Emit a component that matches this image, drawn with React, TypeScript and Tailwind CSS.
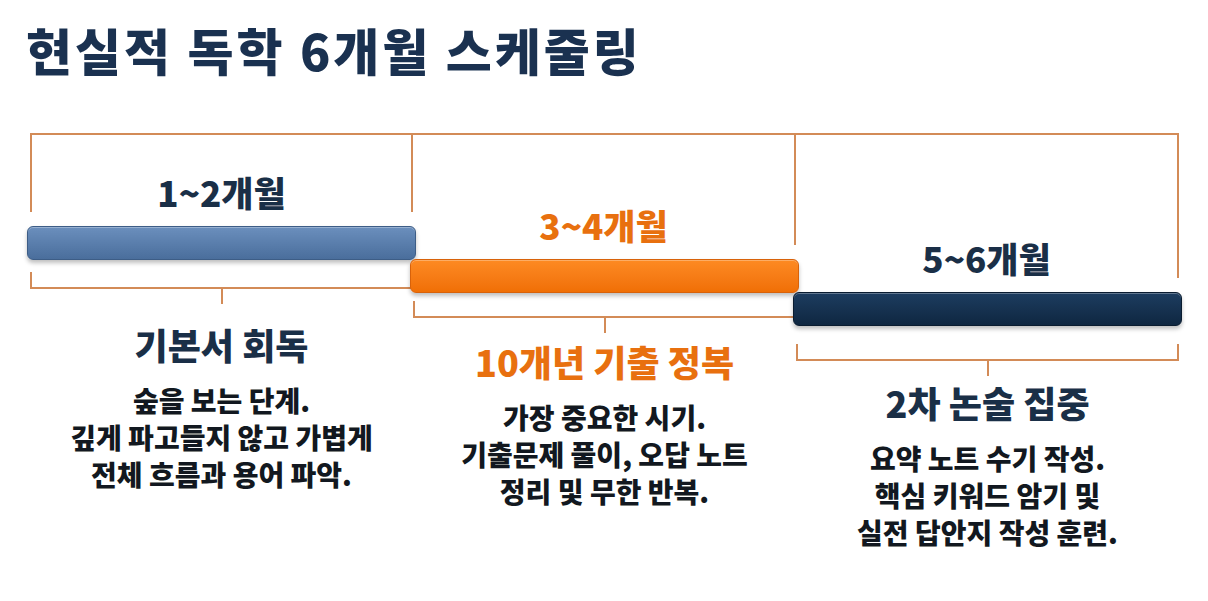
const font = { fontFamily: '"Noto Sans CJK KR", "Noto Sans", sans-serif' };

type Phase = {
  range: string;
  title: string;
  lines: string[];
  accent: boolean;
  top: string;
  bar: string;
  under: string;
  head: string;
};

const phases: Phase[] = [
  {
    range: "1~2개월",
    title: "기본서 회독",
    lines: ["숲을 보는 단계.", "깊게 파고들지 않고 가볍게", "전체 흐름과 용어 파악."],
    accent: false,
    top: "h-[79px] border-l-2 border-r-2",
    bar: "bg-gradient-to-b from-[#6b8fbd] to-[#4a6e9c] border border-[#3d5d86]",
    under: "mt-[12px] border-l-2",
    head: "mt-[20px]",
  },
  {
    range: "3~4개월",
    title: "10개년 기출 정복",
    lines: ["가장 중요한 시기.", "기출문제 풀이, 오답 노트", "정리 및 무한 반복."],
    accent: true,
    top: "h-[112px] border-r-2",
    bar: "bg-gradient-to-b from-[#fd8a22] to-[#f06f05] border border-[#d8620a]",
    under: "mt-[8px] border-l-2",
    head: "mt-[8px]",
  },
  {
    range: "5~6개월",
    title: "2차 논술 집중",
    lines: ["요약 노트 수기 작성.", "핵심 키워드 암기 및", "실전 답안지 작성 훈련."],
    accent: false,
    top: "h-[145px] border-r-2",
    bar: "bg-gradient-to-b from-[#1d3d60] to-[#0f2741] border border-[#0a1c30]",
    under: "mt-[18px] border-l-2 border-r-2",
    head: "mt-[6px]",
  },
];

function Column({ p }: { p: Phase }) {
  const ink = p.accent ? "text-[#e8700f]" : "text-[#1a2f47]";
  return (
    <div className="flex flex-col">
      {/* upper bracket with period label */}
      <div className={`flex flex-col items-center justify-end border-t-2 border-[#d38b57] ${p.top}`}>
        <div className={`text-[35px] font-black leading-[40px] ${ink}`}>{p.range}</div>
      </div>

      {/* period bar */}
      <div className={`relative z-10 -mx-[3px] mt-[14px] h-[34px] rounded-[6px] shadow-[0_3px_4px_rgba(0,0,0,0.25),inset_0_1px_0_rgba(255,255,255,0.3)] ${p.bar}`} />

      {/* lower bracket */}
      <div className={`h-[17px] border-b-2 border-[#d38b57] ${p.under}`} />
      <div className="h-[15px] w-[2px] self-center bg-[#d38b57]" />

      {/* text */}
      <div className={`flex flex-col items-center ${p.head}`}>
        <div className={`text-[36px] font-black leading-[40px] ${ink}`}>{p.title}</div>
        <div className="mt-[18px] text-center text-[28px] font-black leading-[37px] text-[#121820]">
          {p.lines.map((l) => (
            <div key={l}>{l}</div>
          ))}
        </div>
      </div>
    </div>
  );
}

export default function App() {
  return (
    <div className="h-[601px] w-[1208px] overflow-hidden bg-white" style={font}>
      <h1 className="pl-[26px] pt-[20px] text-[50px] font-black leading-[58px] tracking-[3px] text-[#1a3150]">
        현실적 독학 6개월 스케줄링
      </h1>
      <div className="ml-[30px] mt-[55px] grid grid-cols-[383px_383px_383px]">
        {phases.map((p) => (
          <Column key={p.range} p={p} />
        ))}
      </div>
    </div>
  );
}
